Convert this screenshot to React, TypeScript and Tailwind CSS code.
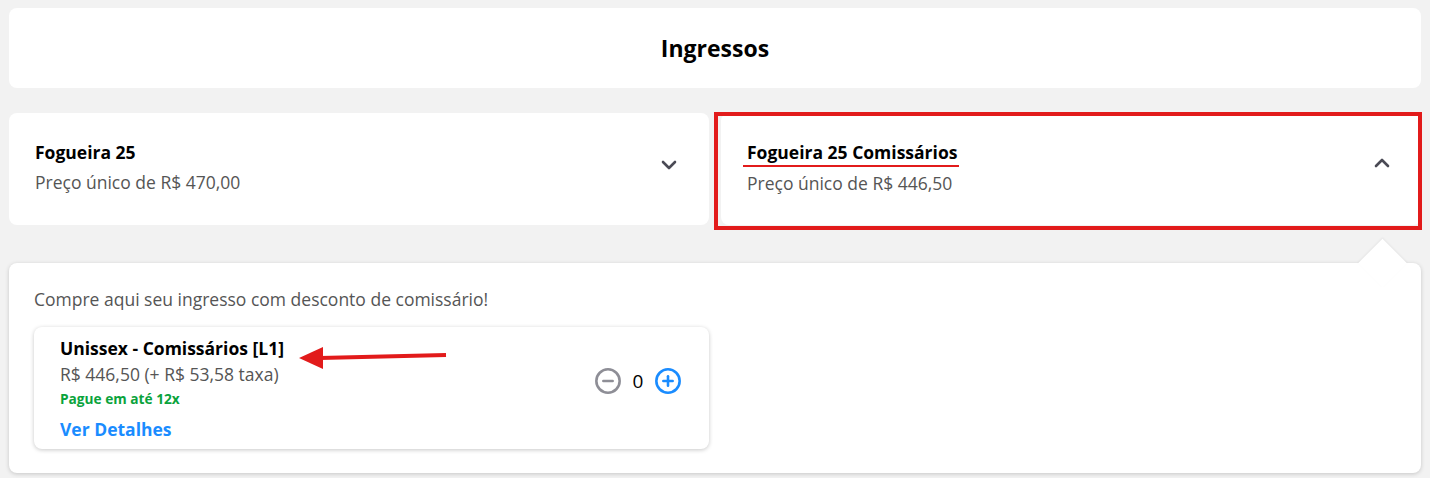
import React from 'react';
import { ChevronDown, ChevronUp, CircleMinus, CirclePlus } from 'lucide-react';

const font = { fontFamily: '"Open Sans", "Liberation Sans", sans-serif' };

export default function App() {
  return (
    <div className="min-h-screen bg-[#f2f2f2] px-[9px] pt-2 pb-2" style={font}>
      {/* Header */}
      <div className="h-20 rounded-lg bg-white flex items-center justify-center">
        <h1 className="text-[23px] font-bold text-black leading-none">Ingressos</h1>
      </div>

      {/* Ticket groups */}
      <div className="relative mt-[25px] grid grid-cols-[700px_1fr] gap-3">
        <div className="h-[112px] rounded-lg bg-white flex items-start justify-between pl-[26px] pr-7 pt-[27px]">
          <div>
            <p className="text-[17.5px] font-bold text-black leading-6">Fogueira 25</p>
            <p className="text-[17.5px] text-[#555] leading-6 mt-1.5">Preço único de R$ 470,00</p>
          </div>
          <ChevronDown className="w-6 h-6 text-[#4a4a55] mt-[13px]" strokeWidth={2.6} />
        </div>

        <div className="h-[112px] rounded-lg bg-white flex items-start justify-between pl-[26px] pr-[27px] pt-[27px]">
          <div>
            <p className="relative inline-block text-[17.5px] font-bold text-black leading-6">
              Fogueira 25 Comissários
              <span className="absolute -left-1 -right-0.5 top-[25px] h-[2px] bg-[#e21b1b]" />
            </p>
            <p className="text-[17.5px] text-[#555] leading-6 mt-1.5">Preço único de R$ 446,50</p>
          </div>
          <ChevronUp className="w-6 h-6 text-[#4a4a55] mt-[11px]" strokeWidth={2.6} />
        </div>

        {/* annotation box */}
        <div className="pointer-events-none absolute left-[705px] -top-px w-[708px] h-[118px] border-4 border-[#e21b1b]" />
      </div>

      {/* Expanded panel */}
      <div className="relative mt-[38px] rounded-lg bg-white shadow-[0_1px_4px_rgba(0,0,0,0.18)] px-[25px] pt-6 pb-6">
        <div className="absolute -top-[17px] right-[21px] w-[35px] h-[35px] rotate-45 bg-white shadow-[-1px_-1px_2px_rgba(0,0,0,0.05)]" />
        <p className="relative text-[17.5px] text-[#555] leading-6">Compre aqui seu ingresso com desconto de comissário!</p>

        <div className="relative mt-4 w-[675px] rounded-lg bg-white shadow-[0_1px_4px_rgba(0,0,0,0.22)] pl-[26px] pr-[27px] pt-[9px] pb-2 flex items-start justify-between">
          <div>
            <p className="text-[17.5px] font-bold text-black leading-6">Unissex - Comissários [L1]</p>
            <p className="text-[17.5px] text-[#555] leading-6 mt-0.5">R$ 446,50 (+ R$ 53,58 taxa)</p>
            <p className="text-[13.7px] font-bold text-[#0aa33c] leading-[18px] mt-1">Pague em até 12x</p>
            <p className="text-[17.5px] font-bold text-[#1a8cff] leading-6 mt-[9px]">Ver Detalhes</p>
          </div>

          <div className="flex items-center gap-[4px] mt-[31px]">
            <CircleMinus className="w-7 h-7 text-[#8e8e96]" strokeWidth={2.2} />
            <span className="text-[19px] text-black leading-6 w-[24px] text-center">0</span>
            <CirclePlus className="w-7 h-7 text-[#1a8cff]" strokeWidth={2.2} />
          </div>

          {/* annotation arrow */}
          <svg className="pointer-events-none absolute left-[264px] top-[18px]" width="150" height="26" viewBox="0 0 150 26">
            <polygon points="1,13 25,2 25,24" fill="#e21b1b" />
            <line x1="22" y1="13" x2="148" y2="10" stroke="#e21b1b" strokeWidth="4" />
          </svg>
        </div>
      </div>
    </div>
  );
}
